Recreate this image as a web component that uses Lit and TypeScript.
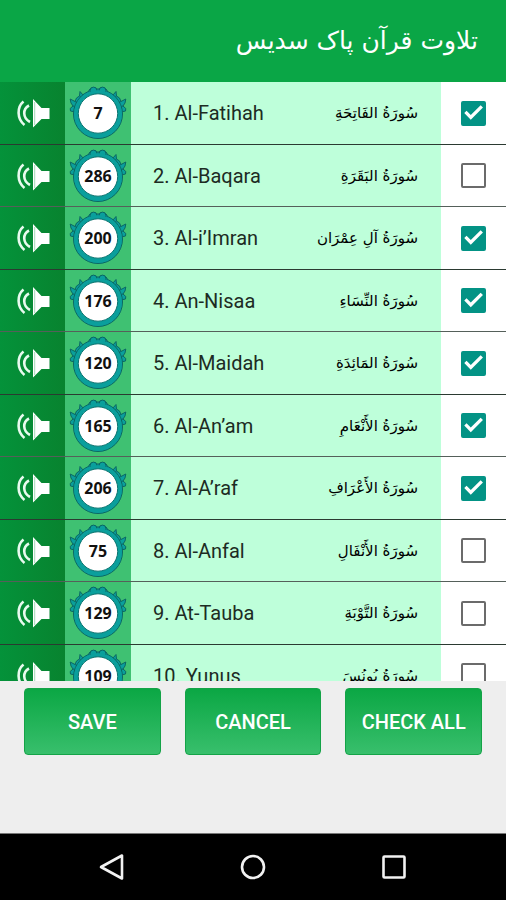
import { LitElement, html, css, svg } from "lit";
import { customElement, property, state } from "lit/decorators.js";

interface Surah {
  id: number;
  name: string;
  arabic: string;
  verses: number;
  checked: boolean;
}

const SURAHS: Surah[] = [
  { id: 1, name: "Al-Fatihah", arabic: "سُورَةُ الفَاتِحَةِ", verses: 7, checked: true },
  { id: 2, name: "Al-Baqara", arabic: "سُورَةُ البَقَرَةِ", verses: 286, checked: false },
  { id: 3, name: "Al-i’Imran", arabic: "سُورَةُ آلِ عِمْرَان", verses: 200, checked: true },
  { id: 4, name: "An-Nisaa", arabic: "سُورَةُ النِّسَاءِ", verses: 176, checked: true },
  { id: 5, name: "Al-Maidah", arabic: "سُورَةُ المَائِدَةِ", verses: 120, checked: true },
  { id: 6, name: "Al-An’am", arabic: "سُورَةُ الأَنْعَامِ", verses: 165, checked: true },
  { id: 7, name: "Al-A’raf", arabic: "سُورَةُ الأَعْرَافِ", verses: 206, checked: true },
  { id: 8, name: "Al-Anfal", arabic: "سُورَةُ الأَنْفَالِ", verses: 75, checked: false },
  { id: 9, name: "At-Tauba", arabic: "سُورَةُ التَّوْبَةِ", verses: 129, checked: false },
  { id: 10, name: "Yunus", arabic: "سُورَةُ يُونُسَ", verses: 109, checked: false },
];

const wing = svg`
  <path d="M20 7 L14 9 L11 5.5 L10.5 10 L7.5 12 L6 15.5 L1.2 13 L2 17 L4 20 L1.2 22.5 L1.5 25 L6 26 L5.5 30 L12 27 L20 12 Z" />
  <path d="M10.5 10 L13 12 M6 15.5 L9 17 M4 20 L8 21" fill="none" />`;

@customElement("verse-badge")
export class VerseBadge extends LitElement {
  @property({ type: Number }) count = 0;

  static styles = css`
    :host {
      display: grid;
      place-items: center;
    }
    svg,
    .count {
      grid-area: 1 / 1;
    }
    svg {
      width: 58px;
      height: 54px;
    }
    .count {
      font: 700 16px/20px "Noto Sans", "Open Sans", sans-serif;
      color: #111;
    }
  `;

  render() {
    return html`
      <svg viewBox="0 0 58 54" aria-hidden="true">
        <g fill="#0a9f9c" stroke="#0b6763" stroke-width="1" stroke-linejoin="round">
          ${wing}
          <g transform="translate(58 0) scale(-1 1)">${wing}</g>
          <circle cx="29" cy="28" r="24.5" />
          <path d="M20 8 V4 Q24 0 28 3 H30 Q34 0 38 4 V8 Z" />
          <circle cx="24.5" cy="4.5" r="3.4" />
          <circle cx="33.5" cy="4.5" r="3.4" />
        </g>
        <circle cx="29" cy="28" r="22" fill="none" stroke="#0a9f9c" stroke-width="3.5" />
        <circle cx="29" cy="27.5" r="19.7" fill="#fff" stroke="#0b7470" stroke-width="1" />
      </svg>
      <span class="count">${this.count}</span>
    `;
  }
}

@customElement("app-root")
export class AppRoot extends LitElement {
  @state() private surahs = SURAHS;

  static styles = css`
    :host {
      display: flex;
      flex-direction: column;
      height: 100vh;
      background: #eee;
      font-family: Roboto, sans-serif;
      color: #1d2b23;
    }
    button {
      border: 0;
      padding: 0;
      background: none;
      color: inherit;
      font: inherit;
      cursor: pointer;
    }
    .header {
      display: flex;
      align-items: center;
      justify-content: flex-start;
      box-sizing: border-box;
      height: 82px;
      flex: none;
      padding: 0 28px;
      background: #0aa646;
      color: #fff;
    }
    .title {
      margin: 0;
      font: 400 25px/48px "DejaVu Sans", sans-serif;
      white-space: nowrap;
    }
    .list {
      flex: 1;
      min-height: 0;
      margin: 0;
      padding: 0;
      list-style: none;
      overflow-y: auto;
      scrollbar-width: none;
    }
    .row {
      display: grid;
      grid-template-columns: 65px 66px 1fr 65px;
      height: 62px;
      border-bottom: 1px solid #2b3a31;
      background: #fff;
    }
    .row:nth-child(even) {
      height: 61px;
      border-bottom-color: #55605a;
    }
    .play {
      display: grid;
      place-items: center;
      background: linear-gradient(90deg, #04923a, #08832f);
    }
    .play svg {
      width: 34px;
      height: 32px;
    }
    .verses {
      display: grid;
      place-items: center;
      background: #3fc172;
    }
    .names {
      display: flex;
      align-items: center;
      justify-content: space-between;
      padding: 0 23px 0 22px;
      background: #beffda;
      cursor: pointer;
    }
    .name {
      font-size: 20px;
      line-height: 24px;
    }
    .arabic {
      font: 400 15px/24px "DejaVu Sans", sans-serif;
      color: #000;
    }
    .pick {
      display: grid;
      place-items: center;
    }
    .box {
      appearance: none;
      display: grid;
      place-items: center;
      box-sizing: border-box;
      width: 25px;
      height: 25px;
      margin: 0;
      border: 2px solid #6b6b6b;
      border-radius: 2px;
      background: #fff;
    }
    .box:checked {
      border-color: #039385;
      background: #039385;
    }
    .box:checked::before {
      content: "";
      width: 21px;
      height: 21px;
      background: #fff;
      clip-path: polygon(6% 50%, 17% 39%, 37% 60%, 84% 13%, 95% 24%, 37% 82%);
    }
    .actions {
      display: flex;
      gap: 24px;
      flex: none;
      padding: 7px 24px 78px;
    }
    .action {
      flex: 1 1 0;
      height: 67px;
      border: 1px solid #14a347;
      border-radius: 4px;
      background: linear-gradient(#0ba744, #38bf6c);
      color: #fff;
      font-size: 20px;
      font-weight: 500;
      line-height: 24px;
      white-space: nowrap;
    }
    .nav {
      display: flex;
      justify-content: center;
      gap: 93px;
      box-sizing: border-box;
      height: 67px;
      flex: none;
      border-top: 1px solid #777;
      background: #000;
    }
    .key {
      display: grid;
      place-items: center;
      width: 48px;
    }
    .key svg {
      width: 28px;
      height: 28px;
      fill: none;
      stroke: #f2f2f2;
      stroke-width: 2.6;
    }
  `;

  private toggle(id: number) {
    this.surahs = this.surahs.map((s) => (s.id === id ? { ...s, checked: !s.checked } : s));
  }

  private checkAll() {
    this.surahs = this.surahs.map((s) => ({ ...s, checked: true }));
  }

  private renderRow(s: Surah) {
    return html`
      <li class="row">
        <button class="play" aria-label="Play ${s.name}">
          <svg viewBox="0 0 34 32" aria-hidden="true">
            <path d="M7.5 4.5 C0.8 10 0.8 22 8.5 28 M13 8.5 C6.5 12 6.5 21 14 25" fill="none" stroke="#e8fbef" stroke-width="2.6" />
            <path d="M17 2 L25.5 11 H33.5 V22 H25.5 L17 30.5 Z" fill="#fff" />
            <path d="M18.7 5 V28" stroke="#7cc796" stroke-width="0.7" />
          </svg>
        </button>
        <div class="verses"><verse-badge .count=${s.verses}></verse-badge></div>
        <label class="names" for="surah-${s.id}">
          <span class="name">${s.id}. ${s.name}</span>
          <span class="arabic" lang="ar" dir="rtl">${s.arabic}</span>
        </label>
        <div class="pick">
          <input
            class="box"
            type="checkbox"
            id="surah-${s.id}"
            .checked=${s.checked}
            @change=${() => this.toggle(s.id)}
          />
        </div>
      </li>
    `;
  }

  render() {
    return html`
      <header class="header" dir="rtl">
        <h1 class="title" lang="ur">تلاوت قرآن پاک سدیس</h1>
      </header>
      <ul class="list">
        ${this.surahs.map((s) => this.renderRow(s))}
      </ul>
      <div class="actions">
        <button class="action">SAVE</button>
        <button class="action">CANCEL</button>
        <button class="action" @click=${this.checkAll}>CHECK ALL</button>
      </div>
      <nav class="nav">
        <button class="key" aria-label="Back">
          <svg viewBox="0 0 28 28"><path d="M24 2.5 V25.5 L3 14 Z" stroke-linejoin="round" /></svg>
        </button>
        <button class="key" aria-label="Home">
          <svg viewBox="0 0 28 28"><circle cx="14" cy="14" r="11" /></svg>
        </button>
        <button class="key" aria-label="Recents">
          <svg viewBox="0 0 28 28"><rect x="3.5" y="3.5" width="21" height="21" rx="1" /></svg>
        </button>
      </nav>
    `;
  }
}
